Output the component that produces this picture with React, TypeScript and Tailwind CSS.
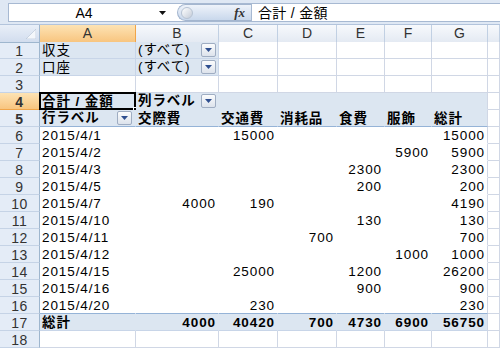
const GRID = 'grid grid-cols-[40px_96px_83px_59px_59px_48px_47px_56px_1fr]';
const BLUE = 'bg-[#dce6f1]';

type Kind = 'grid' | 'filter' | 'band' | 'body' | 'bodyLast' | 'total';

const kindClass: Record<Kind, string> = {
  grid: 'bg-white border-[#d0d7e5]',
  filter: `${BLUE} border-[#c8d5e8]`,
  band: `${BLUE} border-transparent`,
  body: 'bg-white border-transparent',
  bodyLast: 'bg-white border-transparent border-b-[#95b3d7]',
  total: `${BLUE} border-transparent border-b-[#c8d5e8] font-bold`,
};

function Cell({
  kind = 'grid',
  right,
  extra = '',
  children,
}: {
  kind?: Kind;
  right?: boolean;
  extra?: string;
  children?: React.ReactNode;
}) {
  return (
    <div
      className={`relative box-border h-[17px] whitespace-nowrap border-r border-b px-[2px] leading-[18px] ${
        right ? 'text-right' : ''
      } ${kindClass[kind]} ${extra}`}
    >
      {children}
    </div>
  );
}

function DropBtn() {
  return (
    <span className="flex h-[14px] w-[15px] items-center justify-center rounded-[2px] border border-[#9fadc2] bg-gradient-to-b from-[#fbfcfd] to-[#dde3ec]">
      <svg width="7" height="4" viewBox="0 0 7 4">
        <path d="M0 0h7L3.5 4z" fill="#2f4f8f" />
      </svg>
    </span>
  );
}

function RowHead({ n, sel }: { n: number; sel?: boolean }) {
  return (
    <div
      className={`box-border h-[17px] border-r border-b text-center text-[14px] leading-[18px] tracking-[0.5px] text-[#333] ${
        sel
          ? 'border-[#f0a54a] bg-gradient-to-b from-[#fde3b4] to-[#f8c57f]'
          : 'border-r-[#9eb6ce] border-b-[#c5d3e6] bg-[#e4ecf7]'
      }`}
    >
      {n}
    </div>
  );
}

const data: [string, string[]][] = [
  ['2015/4/1', ['', '15000', '', '', '', '15000']],
  ['2015/4/2', ['', '', '', '', '5900', '5900']],
  ['2015/4/3', ['', '', '', '2300', '', '2300']],
  ['2015/4/5', ['', '', '', '200', '', '200']],
  ['2015/4/7', ['4000', '190', '', '', '', '4190']],
  ['2015/4/10', ['', '', '', '130', '', '130']],
  ['2015/4/11', ['', '', '700', '', '', '700']],
  ['2015/4/12', ['', '', '', '', '1000', '1000']],
  ['2015/4/15', ['', '25000', '', '1200', '', '26200']],
  ['2015/4/16', ['', '', '', '900', '', '900']],
  ['2015/4/20', ['', '230', '', '', '', '230']],
];

const totals = ['4000', '40420', '700', '4730', '6900', '56750'];
const heads = ['交際費', '交通費', '消耗品', '食費', '服飾', '総計'];

export default function App() {
  return (
    <div className="h-[350px] w-[500px] overflow-hidden bg-white font-['Liberation_Sans','Noto_Sans_CJK_JP',sans-serif] text-[13.5px] tracking-[0.9px] text-black">
      {/* formula bar */}
      <div className="box-border h-[25px] border-b border-[#b3c4dc] bg-[#dfe8f4] pt-[3px]">
        <div className="ml-[8px] flex h-[19px] border-y border-l border-[#a7b9d2] bg-white">
          <div className="w-[150px] text-center text-[14px] leading-[19px] tracking-normal">A4</div>
          <div className="flex w-[14px] items-center">
            <svg width="7" height="4" viewBox="0 0 7 4">
              <path d="M0 0h7L3.5 4z" fill="#111" />
            </svg>
          </div>
          <div className="w-[4px]" />
          <div className="relative flex w-[74px] items-center rounded-l-full border border-r-0 border-[#a4b6cf] bg-gradient-to-b from-[#eef3fa] to-[#c9d8ec]">
            <span className="ml-[3px] h-[12px] w-[12px] rounded-full border border-[#b7c3d3] bg-gradient-to-br from-white to-[#c4ccd8]" />
            <span className="ml-auto mr-[6px] font-['Liberation_Serif',serif] text-[13px] font-bold italic leading-none tracking-normal text-[#333]">
              fx
            </span>
          </div>
          <div className="flex-1 border-l border-[#a7b9d2] pl-[6px] text-[14px] leading-[18px] tracking-[0.3px]">
            合計 / 金額
          </div>
        </div>
      </div>

      {/* column headers */}
      <div className={`${GRID} h-[17px] text-[14px] leading-[17px] tracking-normal text-[#333]`}>
        <div className="relative box-border border-r border-b border-[#9eb6ce] bg-gradient-to-b from-[#e9eff8] to-[#d2ddee]">
          <svg className="absolute right-[3px] bottom-[3px]" width="10" height="10" viewBox="0 0 10 10">
            <path d="M10 0V10H0z" fill="#f4f7fb" stroke="#b3c1d4" strokeWidth="0.6" />
          </svg>
        </div>
        {['A', 'B', 'C', 'D', 'E', 'F', 'G', ''].map((c, i) => (
          <div
            key={i}
            className={`box-border border-r border-b text-center ${
              i === 0
                ? 'border-[#f0a54a] bg-gradient-to-b from-[#fde3b4] to-[#f8c57f]'
                : 'border-r-[#c1d0e3] border-b-[#9eb6ce] bg-gradient-to-b from-[#f7f9fc] to-[#e4eaf3]'
            }`}
          >
            {c}
          </div>
        ))}
      </div>

      {/* row 1-2 filters */}
      {[
        ['収支', 1],
        ['口座', 2],
      ].map(([label, n]) => (
        <div key={n} className={GRID}>
          <RowHead n={n as number} />
          <Cell kind="filter">{label}</Cell>
          <Cell kind="filter" extra="flex items-center justify-between pr-[2px]">
            <span>(すべて)</span>
            <DropBtn />
          </Cell>
          <Cell />
          <Cell />
          <Cell />
          <Cell />
          <Cell />
          <Cell />
        </div>
      ))}

      {/* row 3 */}
      <div className={GRID}>
        <RowHead n={3} />
        {Array.from({ length: 8 }).map((_, i) => (
          <Cell key={i} />
        ))}
      </div>

      {/* row 4 */}
      <div className={`${GRID} font-bold`}>
        <RowHead n={4} sel />
        <Cell kind="band">
          合計 / 金額
          <span className="pointer-events-none absolute -top-px -left-px right-[-1px] bottom-[-1px] border-2 border-black" />
          <span className="absolute right-[-3px] bottom-[-3px] h-[5px] w-[5px] border border-white bg-black" />
        </Cell>
        <Cell kind="band" extra="flex items-center justify-between pr-[2px]">
          <span>列ラベル</span>
          <DropBtn />
        </Cell>
        <Cell kind="band" />
        <Cell kind="band" />
        <Cell kind="band" />
        <Cell kind="band" />
        <Cell kind="band" extra="border-r-[#d0d7e5]" />
        <Cell />
      </div>

      {/* row 5 */}
      <div className={`${GRID} font-bold`}>
        <RowHead n={5} />
        <Cell kind="band" extra="flex items-center justify-between pr-[3px] border-b-[#95b3d7]">
          <span>行ラベル</span>
          <DropBtn />
        </Cell>
        {heads.map((h, i) => (
          <Cell key={h} kind="band" extra={`border-b-[#95b3d7] ${i === 5 ? 'border-r-[#d0d7e5]' : ''}`}>
            {h}
          </Cell>
        ))}
        <Cell />
      </div>

      {/* body */}
      {data.map(([date, vals], r) => {
        const kind: Kind = r === data.length - 1 ? 'bodyLast' : 'body';
        return (
          <div key={date} className={GRID}>
            <RowHead n={6 + r} />
            <Cell kind={kind}>{date}</Cell>
            {vals.map((v, i) => (
              <Cell key={i} kind={kind} right extra={i === 5 ? 'border-r-[#d0d7e5]' : ''}>
                {v}
              </Cell>
            ))}
            <Cell />
          </div>
        );
      })}

      {/* row 17 totals */}
      <div className={GRID}>
        <RowHead n={17} />
        <Cell kind="total">総計</Cell>
        {totals.map((t, i) => (
          <Cell key={i} kind="total" right extra={i === 5 ? 'border-r-[#d0d7e5]' : ''}>
            {t}
          </Cell>
        ))}
        <Cell />
      </div>

      {/* row 18 */}
      <div className={GRID}>
        <RowHead n={18} />
        {Array.from({ length: 8 }).map((_, i) => (
          <Cell key={i} />
        ))}
      </div>
    </div>
  );
}
